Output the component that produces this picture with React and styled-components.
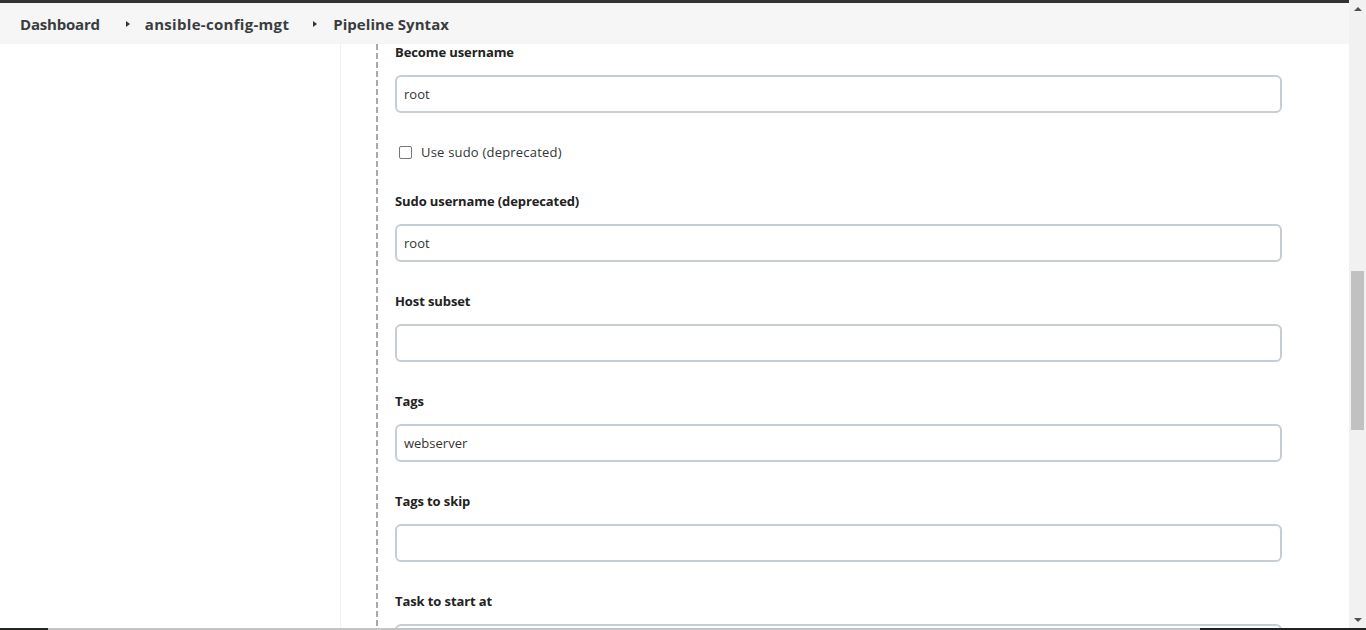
import React from 'react';
import styled, { createGlobalStyle } from 'styled-components';

const GlobalStyle = createGlobalStyle`
  html, body {
    margin: 0;
    padding: 0;
    overflow: hidden;
    background: #fff;
  }
  body {
    font-family: 'Open Sans', 'Noto Sans', Arial, sans-serif;
    color: #333;
  }
`;

const Screen = styled.div`
  width: 1366px;
  height: 630px;
  display: flex;
  flex-direction: column;
  overflow: hidden;
`;

const Window = styled.div`
  flex: 1;
  display: flex;
  min-height: 0;
`;

const Page = styled.div`
  flex: 1;
  display: flex;
  flex-direction: column;
  min-width: 0;
`;

const TopStrip = styled.div`
  height: 3px;
  background: #333;
`;

const Breadcrumbs = styled.nav`
  height: 41px;
  background: #f6f6f6;
  display: flex;
  align-items: center;
  padding-left: 20px;
  font-size: 15px;
  font-weight: 700;
  color: #3a3d40;
`;

const Crumb = styled.span`
  letter-spacing: ${p => p.$spacing || 0}px;
`;

const Caret = styled.span`
  width: 0;
  height: 0;
  border-top: 3.5px solid transparent;
  border-bottom: 3.5px solid transparent;
  border-left: 4px solid #333;
  margin: 0 ${p => p.$right}px 0 ${p => p.$left}px;
`;

const Body = styled.div`
  flex: 1;
  display: flex;
  min-height: 0;
  overflow: hidden;
`;

const Sidebar = styled.aside`
  width: 340px;
  flex-shrink: 0;
  border-right: 1px solid #f0f0f0;
`;

const Rail = styled.div`
  width: 2px;
  margin-left: 35px;
  flex-shrink: 0;
  background: repeating-linear-gradient(
    to bottom,
    #a9a9a9 0,
    #a9a9a9 6px,
    transparent 6px,
    transparent 9px
  );
`;

const Form = styled.div`
  flex: 1;
  display: flex;
  flex-direction: column;
  padding-left: 17px;
  padding-right: 67px;
`;

const Field = styled.div`
  display: flex;
  flex-direction: column;
  gap: 15px;
  margin-bottom: 31px;
  flex-shrink: 0;
`;

const Label = styled.label`
  font-size: 13px;
  font-weight: 700;
  line-height: 16px;
  color: #222;
  letter-spacing: -0.1px;
`;

const Input = styled.input`
  box-sizing: border-box;
  width: 100%;
  height: 38px;
  border: 2px solid #c6ced3;
  border-radius: 6px;
  padding: 0 7px;
  font-family: inherit;
  font-size: 13px;
  color: #333;
  background: #fff;
  outline: none;
`;

const CheckRow = styled.label`
  display: flex;
  align-items: center;
  gap: 9px;
  height: 16px;
  margin-bottom: 33px;
  padding-left: 4px;
  font-size: 13px;
  letter-spacing: 0.2px;
  color: #333;
  flex-shrink: 0;
`;

const Box = styled.span`
  box-sizing: border-box;
  width: 13px;
  height: 13px;
  border: 1px solid #767676;
  border-radius: 2px;
  background: #fff;
`;

const Scrollbar = styled.div`
  width: 17px;
  flex-shrink: 0;
  background: #f1f1f1;
  display: flex;
  flex-direction: column;
  align-items: center;
`;

const Arrow = styled.div`
  height: 17px;
  display: flex;
  align-items: center;
  justify-content: center;
  &::after {
    content: '';
    width: 0;
    height: 0;
    border-left: 4px solid transparent;
    border-right: 4px solid transparent;
    ${p => (p.$down ? 'border-top: 4px solid #505050;' : 'border-bottom: 4px solid #505050;')}
  }
`;

const Track = styled.div`
  flex: 1;
  width: 100%;
  display: flex;
  flex-direction: column;
  align-items: center;
`;

const Thumb = styled.div`
  width: 13px;
  margin-top: ${p => p.$top}px;
  height: ${p => p.$size}px;
  background: #c1c1c1;
`;

const BottomEdge = styled.div`
  height: 2px;
  flex-shrink: 0;
  background: linear-gradient(to right, #1f2a1c 0, #1f2a1c 48px, #c4c4c4 48px, #c4c4c4 1200px, #222 1200px);
`;

const fields = [
  { label: 'Sudo username (deprecated)', value: 'root' },
  { label: 'Host subset', value: '' },
  { label: 'Tags', value: 'webserver' },
  { label: 'Tags to skip', value: '' },
  { label: 'Task to start at', value: '' }
];

const App = () => (
  <Screen>
    <GlobalStyle />
    <Window>
      <Page>
        <TopStrip />
        <Breadcrumbs>
          <Crumb $spacing={-0.2}>Dashboard</Crumb>
          <Caret $left={26} $right={15} />
          <Crumb $spacing={0.3}>ansible-config-mgt</Crumb>
          <Caret $left={24} $right={16} />
          <Crumb $spacing={0.05}>Pipeline Syntax</Crumb>
        </Breadcrumbs>
        <Body>
          <Sidebar />
          <Rail />
          <Form>
            <Field>
              <Label>Become username</Label>
              <Input defaultValue="root" />
            </Field>
            <CheckRow>
              <Box />
              Use sudo (deprecated)
            </CheckRow>
            {fields.map(f => (
              <Field key={f.label}>
                <Label>{f.label}</Label>
                <Input defaultValue={f.value} />
              </Field>
            ))}
          </Form>
        </Body>
      </Page>
      <Scrollbar>
        <Arrow />
        <Track>
          <Thumb $top={254} $size={159} />
        </Track>
        <Arrow $down />
      </Scrollbar>
    </Window>
    <BottomEdge />
  </Screen>
);

export default App;
